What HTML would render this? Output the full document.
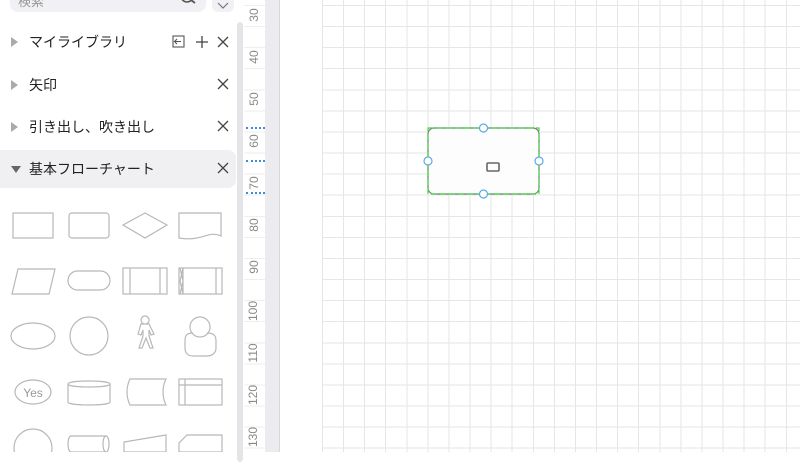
<!DOCTYPE html>
<html><head><meta charset="utf-8"><style>
*{margin:0;padding:0;box-sizing:border-box}
body{width:800px;height:452px;overflow:hidden;background:#fff;font-family:"Liberation Sans","Noto Sans CJK JP",sans-serif;position:relative}
.abs{position:absolute}
.row{position:absolute;left:0;width:236px;height:38px;font-size:14px;color:#222;}
.row .t{position:absolute;left:29px;top:9px}
.row .ar{position:absolute;left:11px;top:14px;width:0;height:0;border-top:5px solid transparent;border-bottom:5px solid transparent;border-left:7px solid #aaa}
.rl{position:absolute;left:244px;width:20px;font-size:12px;color:#8a8a8a;transform:rotate(-90deg);text-align:center}
</style></head><body>
<div class="abs" style="left:10px;top:-20px;width:196px;height:32px;background:#f1f1f5;border-radius:8px"></div>
<div class="abs" style="left:18px;top:-9px;font-size:13px;color:#999">検索</div>
<svg class="abs" style="left:180px;top:-6px" width="18" height="14"><circle cx="7" cy="2" r="6" fill="none" stroke="#555" stroke-width="1.6"/><line x1="11" y1="6" x2="15" y2="9" stroke="#555" stroke-width="1.8"/></svg>
<div class="abs" style="left:212px;top:-8px;width:22px;height:20px;background:#f1f1f5;border-radius:6px"></div>
<svg class="abs" style="left:216px;top:2px" width="14" height="8"><polyline points="2,1 7,6 12,1" fill="none" stroke="#777" stroke-width="1.2"/></svg>

<div class="row" style="top:23px"><span class="ar"></span><span class="t">マイライブラリ</span></div>
<div class="row" style="top:66px"><span class="ar"></span><span class="t">矢印</span></div>
<div class="row" style="top:108px"><span class="ar"></span><span class="t">引き出し、吹き出し</span></div>
<div class="row" style="top:150px;background:#f0f0f3;border-radius:0 8px 8px 0"><span class="ar" style="left:11px;top:16px;border-left:5px solid transparent;border-right:5px solid transparent;border-top:7px solid #666;border-bottom:0"></span><span class="t">基本フローチャート</span></div>

<svg class="abs" style="left:0;top:0" width="236" height="452" fill="none" stroke="#444" stroke-width="1.3">
<g><rect x="173" y="36" width="11" height="11" stroke="#555" stroke-width="1.1"/><path d="M181 41.5h-6M177 39l-2.5 2.5 2.5 2.5" stroke="#555" stroke-width="1.1"/>
<path d="M202 36v12M196 42h12"/>
<path d="M218 37l10 10M228 37l-10 10"/>
<path d="M218 79l10 10M228 79l-10 10"/>
<path d="M218 121l10 10M228 121l-10 10"/>
<path d="M218 163l10 10M228 163l-10 10"/></g>
<g stroke="#b8b8b8" stroke-width="1.2">
<rect x="13" y="213" width="40" height="25"/>
<rect x="69" y="213" width="40" height="25" rx="3"/>
<path d="M145 213l22 12-22 13-22-13z"/>
<path d="M179 213h42v23c-12-6-20 6-42 2z"/>
<path d="M18 269h37l-6 25h-37z"/>
<rect x="68" y="271" width="42" height="19" rx="9.5"/>
<rect x="123" y="268" width="44" height="26"/><path d="M130 268v26M160 268v26"/>
<rect x="179" y="268" width="43" height="26"/><path d="M183 268v26M216 268v26M180 268l3 13-3 13M183 268l-3 13 3 13"/>
<ellipse cx="33" cy="336" rx="22" ry="13"/>
<circle cx="89" cy="336" r="19"/>
<path d="M145 316a4 4 0 1 0 0.1 0zM141 324h8l5 10-3 1-2-5v6l4 12h-3l-4-10-4 10h-3l4-12v-6l-2 5-3-1z"/>
<circle cx="200" cy="327" r="10"/><path d="M193 333c-7 0-8 3-8 8v7c0 5 3 8 8 8h14c5 0 9-3 9-8v-7c0-5-2-8-9-8"/>
<ellipse cx="33" cy="392" rx="18" ry="12"/>
<path d="M68 384v18c0 4 42 4 42 0v-18M68 384c0-4 42-4 42 0c0 4-42 4-42 0"/>
<path d="M130 379h36c-4 8-4 18 0 26h-36c-4-8-4-18 0-26z"/>
<rect x="179" y="379" width="43" height="26"/><path d="M185 379v26M179 385h43"/>
<circle cx="33" cy="448" r="19"/>
<path d="M71 436h35c4 0 4 16 0 16h-35c-4 0-4-16 0-16z"/><path d="M106 436c-4 0-4 16 0 16"/>
<path d="M124 442l42-7v17h-42z"/>
<path d="M187 435h35v17h-43v-9z"/>
</g>
<text x="33" y="397" fill="#999" stroke="none" font-size="12" text-anchor="middle" font-family="Liberation Sans">Yes</text>
</svg>

<div class="abs" style="left:237px;top:22px;width:6px;height:440px;background:#e4e4e9;border-radius:3px"></div>
<div class="abs" style="left:244px;top:0;width:21px;height:452px;background:#fff;background-image:repeating-linear-gradient(to bottom,transparent 0,transparent 5px,#eee 5px,#eee 6px,transparent 6px,transparent 21.08px)"></div>
<div class="abs" style="left:265px;top:0;width:15px;height:452px;background:#ebebf0;border-right:1px solid #d8d8dc"></div>
<div class="rl" style="top:8px">30</div>
<div class="rl" style="top:50px">40</div>
<div class="rl" style="top:92px">50</div>
<div class="rl" style="top:134px">60</div>
<div class="rl" style="top:176px">70</div>
<div class="rl" style="top:218px">80</div>
<div class="rl" style="top:260px">90</div>
<div class="rl" style="top:304px;left:240px;width:26px">100</div>
<div class="rl" style="top:346px;left:240px;width:26px">110</div>
<div class="rl" style="top:388px;left:240px;width:26px">120</div>
<div class="rl" style="top:430px;left:240px;width:26px">130</div>
<div class="abs" style="left:246px;top:127px;width:19px;border-top:2px dotted #3a8fd9"></div>
<div class="abs" style="left:246px;top:160px;width:19px;border-top:2px dotted #3a8fd9"></div>
<div class="abs" style="left:246px;top:192px;width:19px;border-top:2px dotted #3a8fd9"></div>

<div class="abs" style="left:322px;top:0;width:478px;height:452px;background-color:#fff;background-image:repeating-linear-gradient(to right,#e6e6e6 0,#e6e6e6 1px,transparent 1px,transparent 21.08px),repeating-linear-gradient(to bottom,transparent 0,transparent 5px,#e6e6e6 5px,#e6e6e6 6px,transparent 6px,transparent 21.08px)"></div>

<svg class="abs" style="left:0;top:0" width="800" height="452">
<rect x="428" y="128" width="111" height="66" rx="6" fill="#fdfdfd" stroke="#777" stroke-width="1.2"/>
<rect x="428" y="128" width="111" height="66" fill="none" stroke="#3ddc3d" stroke-width="1.2" stroke-dasharray="6 3"/>
<rect x="487" y="163" width="12" height="8" rx="1" fill="none" stroke="#666" stroke-width="1.6"/>
<g fill="#fff" stroke="#5aaae6" stroke-width="1.2">
<circle cx="483.5" cy="128" r="4"/><circle cx="483.5" cy="194" r="4"/>
<circle cx="428" cy="161" r="4"/><circle cx="539" cy="161" r="4"/></g>
</svg>
</body></html>
